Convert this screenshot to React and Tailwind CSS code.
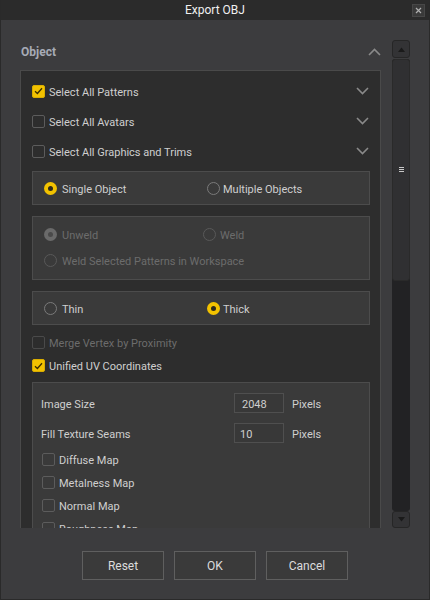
import React from "react";

const font = { fontFamily: 'Roboto, "Noto Sans", sans-serif' };

function Check({ checked, disabled }) {
  if (checked)
    return (
      <span className="w-[13px] h-[13px] rounded-[2px] bg-[#f2c200] border border-[#d9ad00] flex items-center justify-center shrink-0">
        <svg width="9" height="8" viewBox="0 0 9 8">
          <path d="M1 4.2 L3.4 6.5 L8 1.2" fill="none" stroke="#3a2e00" strokeWidth="1.3" />
        </svg>
      </span>
    );
  return (
    <span
      className={
        "w-[13px] h-[13px] rounded-[2px] border shrink-0 " +
        (disabled ? "border-[#4a4a4a]" : "border-[#5c5c5c]")
      }
    />
  );
}

function Radio({ checked, disabled }) {
  if (checked && !disabled)
    return (
      <span className="w-[13px] h-[13px] rounded-full bg-[#f2c200] flex items-center justify-center shrink-0">
        <span className="w-[5px] h-[5px] rounded-full bg-[#2e2a1a]" />
      </span>
    );
  if (checked && disabled)
    return (
      <span className="w-[13px] h-[13px] rounded-full bg-[#6a6a6a] flex items-center justify-center shrink-0">
        <span className="w-[5px] h-[5px] rounded-full bg-[#4a4a4a]" />
      </span>
    );
  return (
    <span
      className={
        "w-[13px] h-[13px] rounded-full border shrink-0 " +
        (disabled ? "border-[#595959]" : "border-[#7a7a7a]")
      }
    />
  );
}

function Chevron({ up }) {
  return (
    <svg width="13" height="8" viewBox="0 0 13 8">
      <path
        d={up ? "M1 7 L6.5 1.5 L12 7" : "M1 1 L6.5 6.5 L12 1"}
        fill="none"
        stroke="#8a8a8a"
        strokeWidth="1.6"
      />
    </svg>
  );
}

function Label({ children, dim, className = "" }) {
  return (
    <span className={"pt-[2px] " + (dim ? "text-[#6c6c6c] " : "text-[#cfcfcf] ") + className}>
      {children}
    </span>
  );
}

function CheckRow({ label, checked }) {
  return (
    <div className="h-[30px] flex items-center">
      <Check checked={checked} />
      <Label className="ml-[4px]">{label}</Label>
      <span className="ml-auto mr-[1px] flex items-center">
        <Chevron />
      </span>
    </div>
  );
}

function Btn({ children }) {
  return (
    <div className="w-[82px] h-[29px] border border-[#5f5f5f] bg-[#3a3a3a] flex items-center justify-center text-[#dcdcdc] text-[12px]">
      {children}
    </div>
  );
}

export default function App() {
  return (
    <div
      className="w-[430px] h-[600px] bg-[#3c3c3e] border-l border-r border-b border-[#2a2a2a] flex flex-col text-[11px] leading-none overflow-hidden"
      style={font}
    >
      {/* title bar */}
      <div className="h-[20px] bg-[#2b2b2b] flex items-center justify-center relative shrink-0">
        <span className="text-[#f0f0f0] text-[12px]">Export OBJ</span>
        <span className="absolute right-[4px] top-[4px] w-[13px] h-[13px] bg-[#3a3a3a] border border-[#474747] flex items-center justify-center">
          <svg width="7" height="7" viewBox="0 0 7 7">
            <path d="M1 1 L6 6 M6 1 L1 6" stroke="#b0b0b0" strokeWidth="1.2" />
          </svg>
        </span>
      </div>

      {/* body */}
      <div className="flex pl-[19px] pt-[20px] gap-[11px]">
        {/* left column */}
        <div className="w-[361px] flex flex-col">
          <div className="h-[30px] flex items-start justify-between pt-[6px]">
            <span className="font-bold text-[#a7abb6] text-[12px] ml-[1px]">Object</span>
            <span className="mt-[2px] flex items-center">
              <Chevron up />
            </span>
          </div>
          <div className="h-[458px] bg-[#2d2d2d] border border-b-0 border-[#4a4a4a] overflow-hidden pl-[11px] pr-[10px] pt-[5px]">
            <CheckRow label="Select All Patterns" checked />
            <CheckRow label="Select All Avatars" />
            <CheckRow label="Select All Graphics and Trims" />

            <div className="mt-[5px] h-[34px] bg-[#3a3a3a] border border-[#4c4c4c] flex items-center pl-[11px]">
              <div className="w-[163px] flex items-center">
                <Radio checked />
                <Label className="ml-[5px]">Single Object</Label>
              </div>
              <div className="flex items-center">
                <Radio />
                <Label className="ml-[3px]">Multiple Objects</Label>
              </div>
            </div>

            <div className="mt-[11px] h-[64px] bg-[#3a3a3a] border border-[#4c4c4c] pl-[11px] pt-[4px]">
              <div className="h-[26px] flex items-center">
                <div className="w-[159px] flex items-center">
                  <Radio checked disabled />
                  <Label dim className="ml-[5px]">Unweld</Label>
                </div>
                <div className="flex items-center">
                  <Radio disabled />
                  <Label dim className="ml-[4px]">Weld</Label>
                </div>
              </div>
              <div className="h-[26px] flex items-center">
                <Radio disabled />
                <Label dim className="ml-[5px]">Weld Selected Patterns in Workspace</Label>
              </div>
            </div>

            <div className="mt-[11px] h-[34px] bg-[#3a3a3a] border border-[#4c4c4c] flex items-center pl-[11px]">
              <div className="w-[163px] flex items-center">
                <Radio />
                <Label className="ml-[5px]">Thin</Label>
              </div>
              <div className="flex items-center">
                <Radio checked />
                <Label className="ml-[3px]">Thick</Label>
              </div>
            </div>

            <div className="mt-[6px] h-[23px] flex items-center">
              <Check disabled />
              <Label dim className="ml-[4px]">Merge Vertex by Proximity</Label>
            </div>
            <div className="h-[23px] flex items-center">
              <Check checked />
              <Label className="ml-[4px]">Unified UV Coordinates</Label>
            </div>

            <div className="mt-[5px] h-[200px] bg-[#3a3a3a] border border-[#4c4c4c] pl-[8px] pt-[10px]">
              <div className="h-[20px] flex items-center">
                <Label className="w-[193px]">Image Size</Label>
                <span className="w-[50px] h-[20px] border border-[#4f4f4f] bg-[#383838] flex items-center pl-[7px] pt-[2px] text-[#cfcfcf]">
                  2048
                </span>
                <Label className="ml-[8px]">Pixels</Label>
              </div>
              <div className="mt-[10px] h-[20px] flex items-center">
                <Label className="w-[193px]">Fill Texture Seams</Label>
                <span className="w-[50px] h-[20px] border border-[#4f4f4f] bg-[#383838] flex items-center pl-[5px] pt-[2px] text-[#cfcfcf]">
                  10
                </span>
                <Label className="ml-[8px]">Pixels</Label>
              </div>
              <div className="mt-[5px] pl-[1px]">
                {["Diffuse Map", "Metalness Map", "Normal Map", "Roughness Map"].map((t) => (
                  <div key={t} className="h-[23px] flex items-center">
                    <Check />
                    <Label className="ml-[4px]">{t}</Label>
                  </div>
                ))}
              </div>
            </div>
          </div>
        </div>

        {/* scrollbar */}
        <div className="w-[18px] h-[488px] flex flex-col">
          <div className="h-[18px] bg-[#333335] border border-[#262626] rounded-[3px] flex items-center justify-center">
            <svg width="7" height="5" viewBox="0 0 7 5">
              <path d="M0 5 L3.5 0.5 L7 5 Z" fill="#1a1a1a" />
            </svg>
          </div>
          <div className="flex-1 bg-[#222224] flex flex-col rounded-[3px] mt-[1px] overflow-hidden">
            <div className="h-[222px] bg-[#303032] border border-[#2a2a2a] rounded-[3px] flex items-center justify-center">
              <svg width="5" height="6" viewBox="0 0 5 6">
                <path d="M0 0.5 H5 M0 2.5 H5 M0 4.5 H5" stroke="#c8c8c8" strokeWidth="1" />
              </svg>
            </div>
          </div>
          <div className="h-[17px] bg-[#333335] border border-[#262626] rounded-[3px] flex items-center justify-center">
            <svg width="7" height="5" viewBox="0 0 7 5">
              <path d="M0 0 L3.5 4.5 L7 0 Z" fill="#1a1a1a" />
            </svg>
          </div>
        </div>
      </div>

      {/* buttons */}
      <div className="mt-[23px] flex justify-center gap-[10px]">
        <Btn>Reset</Btn>
        <Btn>OK</Btn>
        <Btn>Cancel</Btn>
      </div>
    </div>
  );
}
